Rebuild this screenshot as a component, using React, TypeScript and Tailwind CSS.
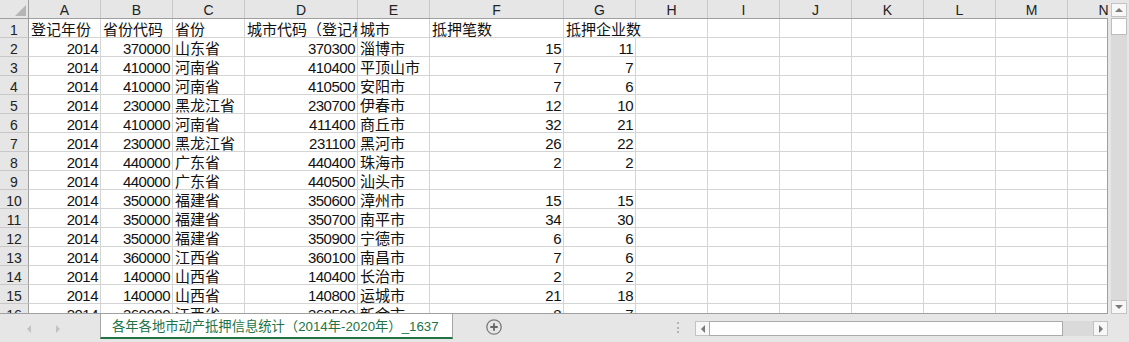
import React from "react";
import clsx from "clsx";

type Col = { key: string; w: string };

const cols: Col[] = [
  { key: "A", w: "w-[72px]" },
  { key: "B", w: "w-[72px]" },
  { key: "C", w: "w-[72px]" },
  { key: "D", w: "w-[113px]" },
  { key: "E", w: "w-[72px]" },
  { key: "F", w: "w-[134px]" },
  { key: "G", w: "w-[72px]" },
  { key: "H", w: "w-[72px]" },
  { key: "I", w: "w-[72px]" },
  { key: "J", w: "w-[72px]" },
  { key: "K", w: "w-[72px]" },
  { key: "L", w: "w-[72px]" },
  { key: "M", w: "w-[72px]" },
  { key: "N", w: "w-[72px]" },
];

// numbers are right-aligned like Excel, text left
const rows: (string | number | null)[][] = [
  ["登记年份", "省份代码", "省份", "城市代码（登记机关）", "城市", "抵押笔数", "抵押企业数"],
  [2014, 370000, "山东省", 370300, "淄博市", 15, 11],
  [2014, 410000, "河南省", 410400, "平顶山市", 7, 7],
  [2014, 410000, "河南省", 410500, "安阳市", 7, 6],
  [2014, 230000, "黑龙江省", 230700, "伊春市", 12, 10],
  [2014, 410000, "河南省", 411400, "商丘市", 32, 21],
  [2014, 230000, "黑龙江省", 231100, "黑河市", 26, 22],
  [2014, 440000, "广东省", 440400, "珠海市", 2, 2],
  [2014, 440000, "广东省", 440500, "汕头市", null, null],
  [2014, 350000, "福建省", 350600, "漳州市", 15, 15],
  [2014, 350000, "福建省", 350700, "南平市", 34, 30],
  [2014, 350000, "福建省", 350900, "宁德市", 6, 6],
  [2014, 360000, "江西省", 360100, "南昌市", 7, 6],
  [2014, 140000, "山西省", 140400, "长治市", 2, 2],
  [2014, 140000, "山西省", 140800, "运城市", 21, 18],
  [2014, 360000, "江西省", 360500, "新余市", 8, 7],
];

const font = "font-['Liberation_Sans','Noto_Sans_CJK_SC',sans-serif]";

const Cell: React.FC<{ w: string; value: string | number | null; r: number; c: number }> = ({ w, value, r, c }) => {
  const isNum = typeof value === "number";
  // D1 is clipped by E1, G1 spills over H1
  const clip = r === 0 && c === 3;
  const spill = r === 0 && c === 6;
  return (
    <div
      className={clsx(
        "h-[19px] shrink-0 flex items-end border-b border-r border-[#d4d4d4] whitespace-nowrap leading-[14px] text-[#111]",
        w,
        isNum ? "justify-end pr-[2px] text-[15px] tracking-[-0.5px]" : "pl-[2px] text-[15px]",
        clip && "overflow-hidden",
        spill && "border-r-transparent relative z-10"
      )}
    >
      {value !== null && <span>{value}</span>}
    </div>
  );
};

const Arrow: React.FC<{ dir: "l" | "r" | "u" | "d"; color?: string }> = ({ dir, color = "#6f6f6f" }) => {
  const pts = {
    l: "5,0 5,8 1,4",
    r: "1,0 1,8 5,4",
    u: "0,5 8,5 4,1",
    d: "0,1 8,1 4,5",
  }[dir];
  const horiz = dir === "l" || dir === "r";
  return (
    <svg width={horiz ? 6 : 8} height={horiz ? 8 : 6} viewBox={horiz ? "0 0 6 8" : "0 0 8 6"}>
      <polygon points={pts} fill={color} />
    </svg>
  );
};

const App: React.FC = () => {
  return (
    <div className={clsx("w-[1129px] h-[342px] bg-[#e6e6e6] flex flex-col overflow-hidden", font)}>
      <div className="flex h-[314px]">
        {/* sheet grid */}
        <div className="w-[1108px] h-[314px] flex flex-col overflow-hidden bg-white">
          {/* column headers */}
          <div className="flex h-[19px] shrink-0 bg-[#e6e6e6] border-b border-[#9f9f9f] overflow-hidden">
            <div className="w-[29px] h-[18px] shrink-0 border-r border-[#9f9f9f] flex items-end justify-end pr-[2px] pb-[2px]">
              <svg width="11" height="11" viewBox="0 0 11 11">
                <polygon points="11,0 11,11 0,11" fill="#b5b5b5" />
              </svg>
            </div>
            {cols.map((c) => (
              <div
                key={c.key}
                className={clsx(
                  "h-[18px] shrink-0 border-r border-[#c8c8c8] flex justify-center pt-[2px] leading-[16px] text-[14px] text-[#222]",
                  c.w
                )}
              >
                {c.key}
              </div>
            ))}
          </div>

          {/* rows */}
          <div className="flex-1 border-b border-r border-[#a0a0a0] overflow-hidden">
            {rows.map((row, r) => (
              <div key={r} className="flex">
                <div className="w-[29px] h-[19px] shrink-0 bg-[#e6e6e6] border-r border-r-[#9f9f9f] border-b border-b-[#c8c8c8] flex items-end justify-center leading-[14px] text-[14px] text-[#222]">
                  {r + 1}
                </div>
                {cols.map((c, i) => (
                  <Cell key={c.key} w={c.w} value={row[i] ?? null} r={r} c={i} />
                ))}
              </div>
            ))}
          </div>
        </div>

        {/* vertical scrollbar */}
        <div className="ml-[3px] mt-[3px] w-[16px] flex flex-col">
          <div className="h-[14px] bg-[#f7f7f7] border border-[#c3c3c3] flex items-center justify-center">
            <Arrow dir="u" color="#7a7a7a" />
          </div>
          <div className="mt-px h-[17px] bg-white border border-[#bdbdbd]" />
          <div className="flex-1 bg-[#dadada]" />
          <div className="h-[14px] bg-[#f7f7f7] border border-[#c3c3c3] flex items-center justify-center">
            <Arrow dir="d" color="#7a7a7a" />
          </div>
        </div>
      </div>

      {/* sheet tabs bar */}
      <div className="flex h-[28px] items-start">
        <div className="w-[100px] h-[28px] flex items-center gap-[23px] pl-[26px] pt-[1px]">
          <Arrow dir="l" color="#c2c2c2" />
          <Arrow dir="r" color="#c2c2c2" />
        </div>
        <div className="w-[353px] h-[25px] bg-white border-l border-r border-[#a6a6a6] border-b-2 border-b-[#217346] flex items-center pl-[11px] pt-[2px] text-[13.3px] text-[#217346] whitespace-nowrap">
          各年各地市动产抵押信息统计（2014年-2020年）_1637
        </div>
        <div className="ml-[33px] mt-[5px]">
          <svg width="16" height="16" viewBox="0 0 16 16">
            <circle cx="8" cy="8" r="7.2" fill="none" stroke="#7b7b7b" strokeWidth="1.3" />
            <path d="M8 4.3v7.4M4.3 8h7.4" stroke="#666" strokeWidth="1.8" />
          </svg>
        </div>
        <div className="ml-[175px] mt-[8px] flex flex-col gap-[2.5px]">
          <div className="w-[2px] h-[2px] bg-[#b3b3b3]" />
          <div className="w-[2px] h-[2px] bg-[#b3b3b3]" />
          <div className="w-[2px] h-[2px] bg-[#b3b3b3]" />
        </div>
        {/* horizontal scrollbar */}
        <div className="ml-[16px] mt-[7px] w-[413px] h-[15px] flex">
          <div className="w-[15px] h-[15px] bg-[#f7f7f7] border border-[#c3c3c3] flex items-center justify-center">
            <Arrow dir="l" color="#7a7a7a" />
          </div>
          <div className="-ml-px w-[354px] h-[15px] bg-white border border-[#ababab]" />
          <div className="flex-1 bg-[#dadada]" />
          <div className="w-[15px] h-[15px] bg-[#f7f7f7] border border-[#c3c3c3] flex items-center justify-center">
            <Arrow dir="r" color="#7a7a7a" />
          </div>
        </div>
      </div>
    </div>
  );
};

export default App;
